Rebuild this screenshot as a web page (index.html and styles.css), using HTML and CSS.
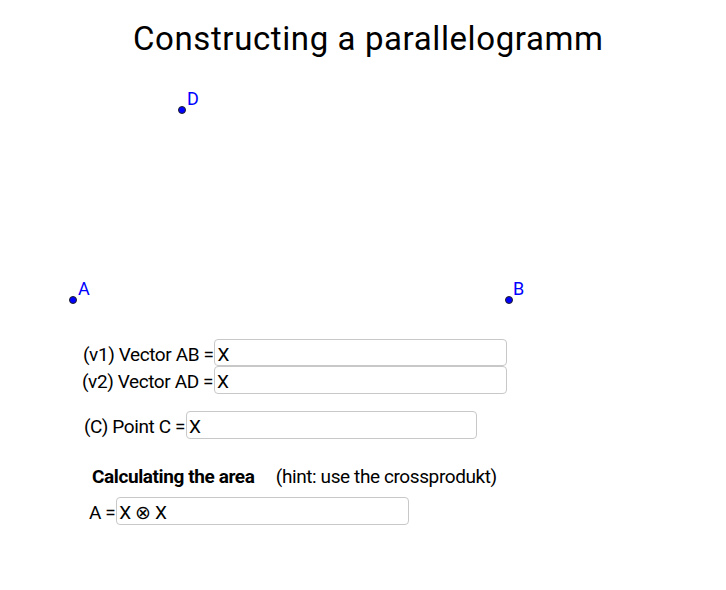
FILE: index.html
```html
<!DOCTYPE html>
<html lang="en">
<head>
    <meta charset="UTF-8">
    <title>Constructing a parallelogramm</title>
    <link rel="stylesheet" href="styles.css">
</head>
<body>

    <h1 class="title">Constructing a parallelogramm</h1>

    <!-- Drawing board with the free points -->
    <div class="board">
        <span class="point" style="left: 178px; top: 51px;"></span>
        <span class="point-label" style="left: 187px; top: 35px;">D</span>

        <span class="point" style="left: 69px; top: 241px;"></span>
        <span class="point-label" style="left: 78px; top: 225px;">A</span>

        <span class="point" style="left: 505px; top: 241px;"></span>
        <span class="point-label" style="left: 513px; top: 225px;">B</span>
    </div>

    <!-- Input fields -->
    <div class="form">
        <div class="row row-v1">
            <label>(v1) Vector AB =</label>
            <div class="field field-wide">X</div>
        </div>
        <div class="row row-v2">
            <label>(v2) Vector AD =</label>
            <div class="field field-wide">X</div>
        </div>
        <div class="row row-c">
            <label>(C) Point C =</label>
            <div class="field field-c">X</div>
        </div>

        <div class="area-heading">
            <span class="bold">Calculating the area</span>
            <span class="hint">(hint: use the crossprodukt)</span>
        </div>

        <div class="row row-a">
            <label>A =</label>
            <div class="field field-wide">X ⊗ X</div>
        </div>
    </div>

</body>
</html>
```

FILE: styles.css
```css
body { font-family: Roboto, "Liberation Sans", sans-serif; margin: 0; padding: 0; background: white; color: black; }

/* Title */
.title {
    margin: 0;
    padding: 23px 0 0 133px;
    font-size: 33px;
    font-weight: normal;
    letter-spacing: 0.6px;
    line-height: 32px;
}

/* Board with points */
.board { position: relative; height: 284px; }
.point {
    position: absolute;
    width: 6px;
    height: 6px;
    border: 1px solid #222;
    border-radius: 50%;
    background: #0000ff;
}
.point-label {
    position: absolute;
    font-size: 18px;
    line-height: 18px;
    color: #0000ff;
}

/* Form rows */
.form { font-size: 19px; letter-spacing: -0.4px; }
.row { display: flex; align-items: baseline; }
.row label { padding-right: 1px; white-space: nowrap; }
.row-v1 { margin-left: 83px; }
.row-v2 { margin-left: 82px; }
.row-c { margin-left: 84px; margin-top: 17px; }
.row-a { margin-left: 89px; margin-top: 8px; }

.field {
    box-sizing: border-box;
    height: 28px;
    padding: 4px 2px 0;
    line-height: 22px;
    border: 1px solid #c8c8c8;
    border-radius: 4px;
    background: white;
}
.row-v1 .field { height: 27px; }
.field-wide { width: 293px; }
.field-c { width: 291px; }

/* Area section */
.area-heading { margin: 26px 0 0 92px; line-height: 24px; }
.bold { font-weight: bold; }
.hint { margin-left: 17px; }
```
